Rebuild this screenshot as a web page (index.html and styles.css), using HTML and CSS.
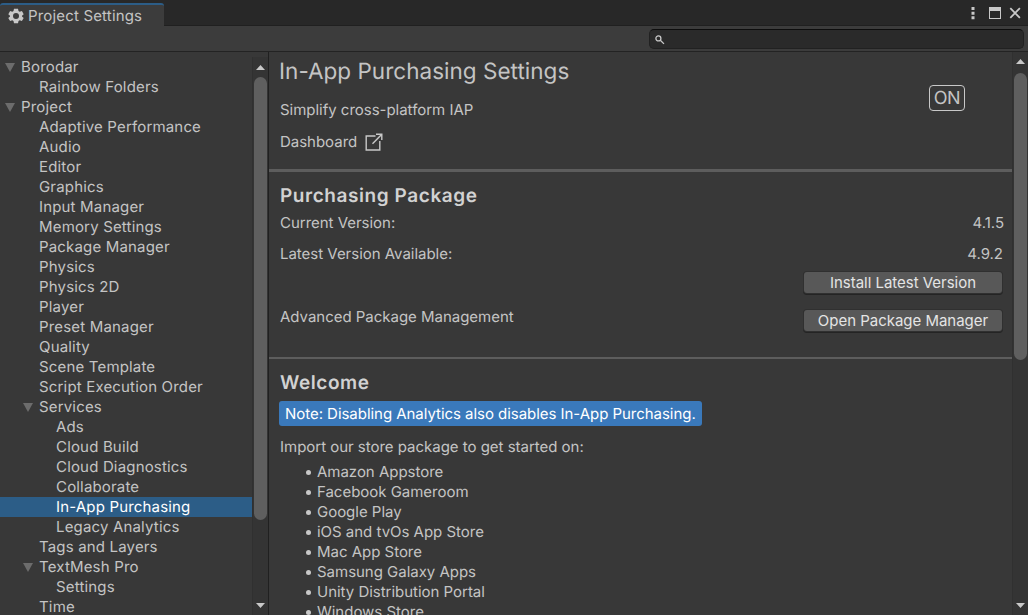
FILE: index.html
```html
<!DOCTYPE html>
<html lang="en">
<head>
<meta charset="utf-8">
<title>Project Settings</title>
<link rel="stylesheet" href="styles.css">
</head>
<body>
<div class="window">
  <header class="titlebar">
    <div class="tab">
      <svg class="gear" viewBox="0 0 16 16" width="16" height="16"><path fill-rule="evenodd" d="M6 .8h4l.5 2.3 1.2.7 2.2-.8 1.8 3.2L14 7.700v.8l1.700 1.400-1.800 3.200-2.200-.8-1.200.7-.5 2.300H6l-.5-2.300-1.200-.7-2.200.8L.3 9.900 2 8.500v-.8L.3 6.200 2.100 3l2.200.8 1.200-.7zM8 5a3 3 0 1 0 0 6 3 3 0 0 0 0-6z"/></svg>
      <span class="tab-title">Project Settings</span>
    </div>
    <div class="controls">
      <svg width="58" height="26" viewBox="0 0 58 26">
        <path class="fill" d="M5.500 7h3v3h-3zM5.500 11.700h3v3h-3zM5.500 16.200h3v3h-3z"/>
        <path class="fill" fill-rule="evenodd" d="M23 7h12v12H23zM24 11v7h10v-7z"/>
        <path class="line" d="M44.300 8.200l9.600 9.600M53.900 8.200l-9.600 9.600"/>
      </svg>
    </div>
  </header>
  <div class="toolbar">
    <div class="search">
      <svg width="10" height="10" viewBox="0 0 10 10"><circle cx="3.400" cy="3.400" r="2.500"/><path d="M5.300 5.300l3.700 3.600"/></svg>
    </div>
  </div>
  <main class="body">
    <nav class="sidebar">
      <ul class="tree">
        <li class="l0 open">Borodar</li>
        <li class="l1">Rainbow Folders</li>
        <li class="l0 open">Project</li>
        <li class="l1">Adaptive Performance</li>
        <li class="l1">Audio</li>
        <li class="l1">Editor</li>
        <li class="l1">Graphics</li>
        <li class="l1">Input Manager</li>
        <li class="l1">Memory Settings</li>
        <li class="l1">Package Manager</li>
        <li class="l1">Physics</li>
        <li class="l1">Physics 2D</li>
        <li class="l1">Player</li>
        <li class="l1">Preset Manager</li>
        <li class="l1">Quality</li>
        <li class="l1">Scene Template</li>
        <li class="l1">Script Execution Order</li>
        <li class="l1 open">Services</li>
        <li class="l2">Ads</li>
        <li class="l2">Cloud Build</li>
        <li class="l2">Cloud Diagnostics</li>
        <li class="l2">Collaborate</li>
        <li class="l2 selected">In-App Purchasing</li>
        <li class="l2">Legacy Analytics</li>
        <li class="l1">Tags and Layers</li>
        <li class="l1 open">TextMesh Pro</li>
        <li class="l2">Settings</li>
        <li class="l1">Time</li>
      </ul>
      <div class="scrollbar side-scroll">
        <i class="arrow up"></i>
        <div class="thumb"></div>
        <i class="arrow down"></i>
      </div>
    </nav>
    <section class="content">
      <div class="pane">
        <div class="intro">
          <div class="intro-text">
            <h1>In-App Purchasing Settings</h1>
            <p class="tagline">Simplify cross-platform IAP</p>
            <a class="dashboard"><span>Dashboard</span>
              <svg width="18" height="18" viewBox="0 0 18 18"><path d="M10.500 3H1.200v14h13.600V8M11 1.200h5.800V7M16.600 1.400L7.500 10.800"/></svg>
            </a>
          </div>
          <div class="toggle">ON</div>
        </div>
        <div class="package">
          <h2>Purchasing Package</h2>
          <div class="row current"><span>Current Version:</span><span class="v1">4.1.5</span></div>
          <div class="row latest"><span>Latest Version Available:</span><span class="v2">4.9.2</span></div>
          <div class="row install"><button>Install Latest Version</button></div>
          <div class="row advanced"><span>Advanced Package Management</span><button>Open Package Manager</button></div>
        </div>
        <div class="welcome">
          <h2>Welcome</h2>
          <div class="note">Note: Disabling Analytics also disables In-App Purchasing.</div>
          <p class="import">Import our store package to get started on:</p>
          <ul class="stores">
            <li>Amazon Appstore</li>
            <li>Facebook Gameroom</li>
            <li>Google Play</li>
            <li>iOS and tvOs App Store</li>
            <li>Mac App Store</li>
            <li>Samsung Galaxy Apps</li>
            <li>Unity Distribution Portal</li>
            <li>Windows Store</li>
          </ul>
        </div>
      </div>
      <div class="scrollbar main-scroll">
        <i class="arrow up"></i>
        <div class="thumb"></div>
        <i class="arrow down"></i>
      </div>
    </section>
  </main>
</div>
</body>
</html>
```
FILE: styles.css
```css
* { box-sizing: border-box; margin: 0; padding: 0; }
body { background: #383838; color: #c4c4c4; font: 400 15px/20px Inter, sans-serif; letter-spacing: -0.02px; text-rendering: geometricPrecision; overflow: hidden; }
ul { list-style: none; }
.window { width: 1028px; height: 615px; display: flex; flex-direction: column; overflow: hidden; }
.titlebar { height: 26px; background: #282828; border-bottom: 1px solid #202020; display: flex; justify-content: space-between; flex: none; }
.tab { width: 164px; height: 23px; margin-top: 3px; background: #3c3c3c; border-top: 2px solid #2c5d87; border-radius: 3px 3px 0 0; display: flex; align-items: center; padding: 1px 0 0 8px; gap: 4px; letter-spacing: 0.17px; }
.gear { fill: #c8c8c8; }
.controls svg { display: block; margin-right: 4px; }
.fill { fill: #c8c8c8; }
.line { fill: none; stroke: #c8c8c8; stroke-width: 1.800; }
.toolbar { height: 26px; flex: none; background: #3c3c3c; border-bottom: 1px solid #232323; display: flex; justify-content: flex-end; padding: 3px 4px 0 0; }
.search { width: 375px; height: 20px; background: #2a2a2a; border: 1px solid #212121; border-top-color: #0d0d0d; border-radius: 5px; padding: 5px; }
.search svg { display: block; fill: none; stroke: #c8c8c8; stroke-width: 1.3; }
.body { flex: 1; min-height: 0; display: flex; }
.sidebar { width: 269px; display: flex; border-right: 1px solid #202020; padding-top: 5px; overflow: hidden; flex: none; }
.tree { width: 252px; flex: none; letter-spacing: 0.17px; }
.tree li { height: 20px; display: flex; align-items: center; white-space: nowrap; }
.l0 { padding-left: 21px; }
.l1 { padding-left: 39px; }
.l2 { padding-left: 56px; }
.open::before { content: ""; width: 10px; height: 9px; margin: 1px 6px 0 -16px; background: #6c6c6c; clip-path: polygon(0 0, 100% 0, 50% 100%); }
.tree .selected { background: #2c5d87; color: #fff; }
.scrollbar { width: 16px; background: #343434; border-left: 1px solid #303030; display: flex; flex-direction: column; align-items: center; flex: none; }
.arrow { width: 9px; height: 5px; background: #c8c8c8; flex: none; }
.up { clip-path: polygon(50% 0, 100% 100%, 0 100%); }
.down { clip-path: polygon(0 0, 100% 0, 50% 100%); margin-top: auto; }
.thumb { width: 13px; background: #5f5f5f; border-radius: 7px; }
.side-scroll { padding: 8px 0 7px; }
.side-scroll .thumb { height: 443px; margin-top: 7px; }
.content { flex: 1; min-width: 0; display: flex; }
.pane { flex: 1; min-width: 0; overflow: hidden; }
.main-scroll { padding: 7px 0; }
.main-scroll .thumb { height: 287px; margin-top: 9px; }
.intro { height: 120px; padding-left: 11px; border-bottom: 3px solid #5d5d5d; display: flex; justify-content: space-between; }
h1 { font-size: 22.500px; font-weight: 400; line-height: 28px; margin: 6px 0 0 -1px; letter-spacing: 0.02px; }
.tagline { margin-top: 14px; }
.dashboard { margin-top: 12px; display: flex; align-items: center; gap: 8px; }
.dashboard svg { fill: none; stroke: #c8c8c8; stroke-width: 1.400; }
.toggle { width: 36px; height: 26px; margin: 33px 47px 0 0; border: 1px solid #c8c8c8; border-radius: 4px; font-size: 18px; line-height: 25px; text-align: center; letter-spacing: -0.3px; }
.package { height: 187px; border-bottom: 2px solid #5d5d5d; padding: 12px 10px 0 11px; }
h2 { font-size: 19px; font-weight: 600; line-height: 24px; color: #d2d2d2; letter-spacing: 0.57px; }
.row { display: flex; justify-content: space-between; }
.current { margin-top: 5px; }
.latest { margin-top: 11px; }
.v1 { margin-right: -2px; }
.v2 { margin-right: -1px; }
.install { margin-top: 8px; justify-content: flex-end; }
.advanced { margin-top: 16px; }
.advanced span { margin-top: -2px; }
button { width: 198px; height: 21px; font: inherit; letter-spacing: inherit; color: #e4e4e4; background: #585858; border: 0; border-radius: 3px; box-shadow: 0 0 0 1px #303030, 0 1px 0 1px #242424; line-height: 20px; }
.advanced button { margin-top: 1px; }
.welcome { padding: 12px 0 0 11px; }
.note { display: inline-block; margin: 6px 0 0 -1px; height: 25px; line-height: 25px; padding: 0 6px; border-radius: 3px; background: #3a79bb; color: #fff; vertical-align: top; letter-spacing: -0.04px; }
.import { margin-top: 11px; }
.stores { margin-top: 5px; }
.stores li { display: flex; align-items: center; height: 20px; padding-left: 26px; }
.stores li::before { content: ""; width: 5px; height: 5px; border-radius: 50%; background: #c8c8c8; margin: 1px 6px 0 0; }
```
